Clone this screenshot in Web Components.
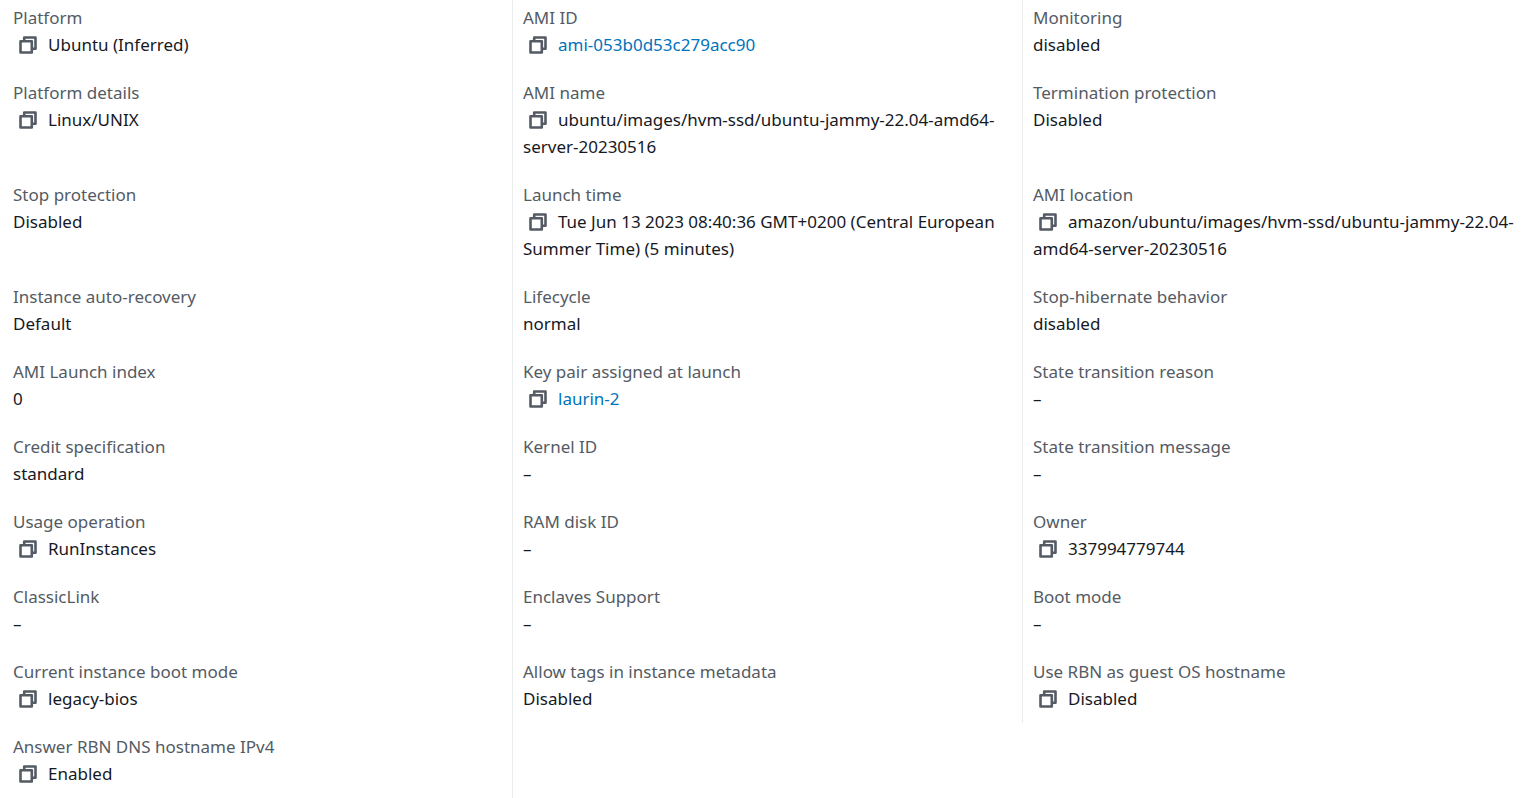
<!DOCTYPE html>
<html lang="en">
<head>
<meta charset="utf-8">
<meta name="viewport" content="width=device-width, initial-scale=1">
<title>Instance details</title>
<style>
body { margin: 0; background: #fff; color: #16191f; font: 17px/27px "Noto Sans", sans-serif; }
</style>
</head>
<body>
<instance-details>
  <detail-item label="Platform" copy>Ubuntu (Inferred)</detail-item>
  <detail-item label="AMI ID" copy><a href="#ami">ami-053b0d53c279acc90</a></detail-item>
  <detail-item label="Monitoring">disabled</detail-item>
  <detail-item label="Platform details" copy>Linux/UNIX</detail-item>
  <detail-item label="AMI name" copy>ubuntu/images/hvm-ssd/ubuntu-jammy-22.04-amd64-server-20230516</detail-item>
  <detail-item label="Termination protection">Disabled</detail-item>
  <detail-item label="Stop protection">Disabled</detail-item>
  <detail-item label="Launch time" copy>Tue Jun 13 2023 08:40:36 GMT+0200 (Central European Summer Time) (5 minutes)</detail-item>
  <detail-item label="AMI location" copy>amazon/ubuntu/images/hvm-ssd/ubuntu-jammy-22.04-amd64-server-20230516</detail-item>
  <detail-item label="Instance auto-recovery">Default</detail-item>
  <detail-item label="Lifecycle">normal</detail-item>
  <detail-item label="Stop-hibernate behavior">disabled</detail-item>
  <detail-item label="AMI Launch index">0</detail-item>
  <detail-item label="Key pair assigned at launch" copy><a href="#key">laurin-2</a></detail-item>
  <detail-item label="State transition reason">–</detail-item>
  <detail-item label="Credit specification">standard</detail-item>
  <detail-item label="Kernel ID">–</detail-item>
  <detail-item label="State transition message">–</detail-item>
  <detail-item label="Usage operation" copy>RunInstances</detail-item>
  <detail-item label="RAM disk ID">–</detail-item>
  <detail-item label="Owner" copy>337994779744</detail-item>
  <detail-item label="ClassicLink">–</detail-item>
  <detail-item label="Enclaves Support">–</detail-item>
  <detail-item label="Boot mode">–</detail-item>
  <detail-item label="Current instance boot mode" copy>legacy-bios</detail-item>
  <detail-item label="Allow tags in instance metadata">Disabled</detail-item>
  <detail-item label="Use RBN as guest OS hostname" copy>Disabled</detail-item>
  <detail-item label="Answer RBN DNS hostname IPv4" copy>Enabled</detail-item>
</instance-details>

<template id="details-template">
  <style>
    :host { display: block; overflow: hidden; }
    .grid {
      display: grid;
      grid-template-columns: repeat(3, minmax(0, 1fr));
      margin-top: -6px;
      padding: 0 1px 0 3px;
    }
    ::slotted(detail-item) { border-right: 1px solid #eaeded; }
    ::slotted(detail-item:nth-child(3n)) { border-right-color: transparent; }
  </style>
  <div class="grid"><slot></slot></div>
</template>

<template id="item-template">
  <style>
    :host { display: block; padding: 10px 10px 11px; }
    .label { color: #545b64; }
    ::slotted(a) { color: #0073bb; text-decoration: none; }
  </style>
  <div class="label" id="label"></div>
  <div role="group" aria-labelledby="label"><slot></slot></div>
</template>

<template id="copy-template">
  <style>
    :host { display: inline-block; vertical-align: top; margin-right: 11px; }
    button {
      display: flex; align-items: center; height: 27px;
      padding: 0 0 0 6px; border: 0; background: none; color: #545b64; cursor: pointer;
    }
    svg { display: block; }
  </style>
  <button type="button" aria-label="Copy">
    <svg width="18" height="18" viewBox="0 0 18 18" fill="none" stroke="currentColor" stroke-width="2.6" stroke-linejoin="round" aria-hidden="true">
      <path d="M1.5 5.2h11.3v11.3H1.5z"/>
      <path d="M5.2 5V1.5h11.3v11.3H13"/>
    </svg>
  </button>
</template>

<script>
const clone = id => document.getElementById(id).content.cloneNode(true);

class CopyButton extends HTMLElement {
  constructor() {
    super();
    this.attachShadow({ mode: "open" }).append(clone("copy-template"));
    this.shadowRoot.querySelector("button").addEventListener("click", () => {
      navigator.clipboard?.writeText(this.getAttribute("value") || "");
    });
  }
}
customElements.define("copy-button", CopyButton);

class DetailItem extends HTMLElement {
  connectedCallback() {
    if (this.shadowRoot) return;
    const root = this.attachShadow({ mode: "open" });
    root.append(clone("item-template"));
    root.getElementById("label").textContent = this.getAttribute("label");
    if (this.hasAttribute("copy")) {
      const copy = document.createElement("copy-button");
      copy.setAttribute("value", this.textContent);
      root.querySelector("slot").before(copy);
    }
  }
}
customElements.define("detail-item", DetailItem);

class InstanceDetails extends HTMLElement {
  constructor() {
    super();
    this.attachShadow({ mode: "open" }).append(clone("details-template"));
  }
}
customElements.define("instance-details", InstanceDetails);
</script>
</body>
</html>
